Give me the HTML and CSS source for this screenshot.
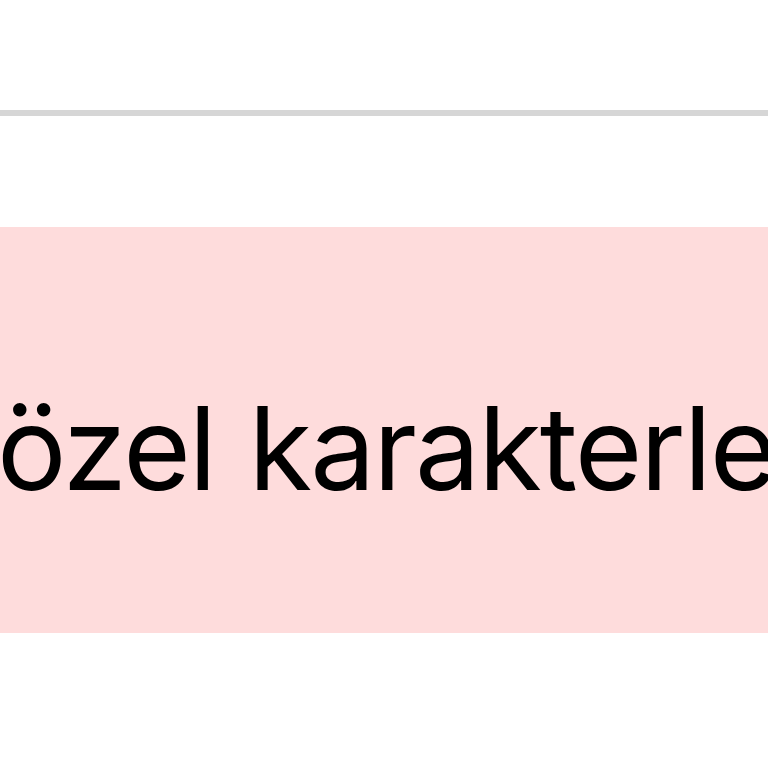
FILE: index.html
```html
<!DOCTYPE html>
<html lang="tr">
<head>
<meta charset="utf-8">
<link rel="stylesheet" href="styles.css">
</head>
<body>
<div class="page">
  <div class="top"></div>
  <div class="rule"></div>
  <div class="gap"></div>
  <div class="band">
    <p class="label">özel karakterle</p>
  </div>
</div>
</body>
</html>
```
FILE: styles.css
```css
html, body {
  margin: 0;
  padding: 0;
  background: #ffffff;
  overflow: hidden;
}
.page {
  width: 768px;
  height: 768px;
  display: flex;
  flex-direction: column;
}
.top {
  height: 110px;
}
.rule {
  height: 6px;
  background: #d6d6d6;
}
.gap {
  height: 111px;
}
.band {
  height: 406px;
  background: #fedcdc;
  box-sizing: border-box;
  padding-top: 163px;
  overflow: hidden;
}
.label {
  margin: 0 0 0 -3px;
  font-family: Inter, "Noto Sans", sans-serif;
  font-size: 116px;
  line-height: 1;
  letter-spacing: -2px;
  word-spacing: 3px;
  color: #000000;
  white-space: nowrap;
}
```
